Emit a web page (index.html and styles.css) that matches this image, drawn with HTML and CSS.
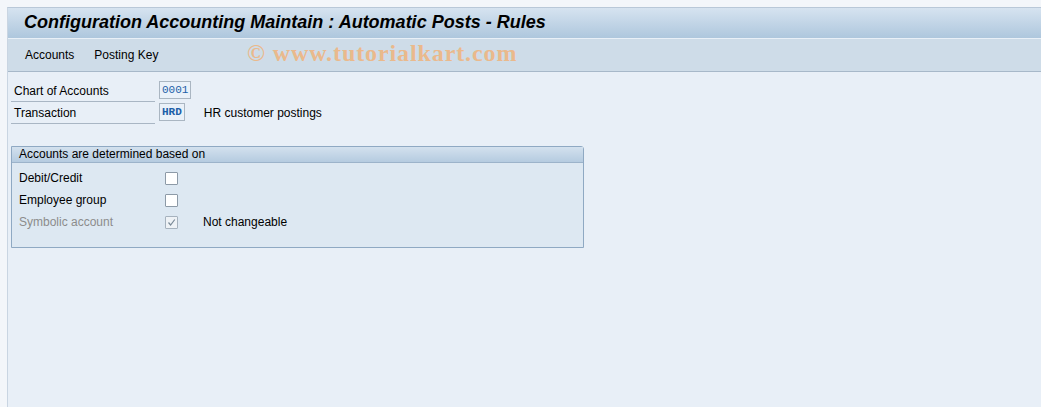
FILE: index.html
```html
<!DOCTYPE html>
<html lang="en">
<head>
  <meta charset="UTF-8">
  <title>Automatic Posts - Rules</title>
  <link rel="stylesheet" href="styles.css">
</head>
<body>
  <div class="window">
    <div class="title-bar">Configuration Accounting Maintain : Automatic Posts - Rules</div>
    <div class="toolbar">
      <span class="menu-item">Accounts</span>
      <span class="menu-item">Posting Key</span>
      <span class="watermark">&copy; www.tutorialkart.com</span>
    </div>

    <div class="content">
      <div class="field-row">
        <span class="field-label">Chart of Accounts</span>
        <span class="field-input">0001</span>
      </div>
      <div class="field-row">
        <span class="field-label">Transaction</span>
        <span class="field-input bold">HRD</span>
        <span class="field-text">HR customer postings</span>
      </div>

      <div class="group">
        <div class="group-title">Accounts are determined based on</div>
        <div class="group-body">
          <div class="check-row">
            <span class="check-label">Debit/Credit</span>
            <span class="checkbox"></span>
          </div>
          <div class="check-row">
            <span class="check-label">Employee group</span>
            <span class="checkbox"></span>
          </div>
          <div class="check-row">
            <span class="check-label disabled">Symbolic account</span>
            <span class="checkbox checked">
              <svg width="9" height="9" viewBox="0 0 9 9"><path d="M1.5 4.5 L3.6 7 L7.8 1.5" fill="none" stroke="#7a8a98" stroke-width="1.2"/></svg>
            </span>
            <span class="check-text">Not changeable</span>
          </div>
        </div>
      </div>
    </div>
  </div>
</body>
</html>
```

FILE: styles.css
```css
html, body {
  margin: 0;
  padding: 0;
  height: 100%;
}
body {
  font-family: "Liberation Sans", Arial, sans-serif;
  font-size: 12px;
  color: #000;
  background: #f3f6fa;
  padding: 7px 0 0 7px;
  box-sizing: border-box;
  overflow: hidden;
}
.window {
  height: 100%;
  border-left: 1px solid #c9d5e2;
  border-top: 1px solid #b9c8d8;
  background: #e8eff7;
}
.title-bar {
  height: 30px;
  line-height: 28px;
  padding-left: 16px;
  font-size: 18px;
  font-weight: bold;
  font-style: italic;
  color: #000;
  background: linear-gradient(#d6e3f0, #aec7dd);
  border-bottom: 1px solid #e9f0f7;
}
.toolbar {
  height: 32px;
  display: flex;
  align-items: center;
  padding-left: 17px;
  background: #cedce8;
  border-bottom: 1px solid #a7b8c9;
  position: relative;
}
.menu-item {
  margin-right: 20px;
  font-size: 12px;
}
.watermark {
  position: absolute;
  left: 239px;
  top: 1px;
  font-family: "Liberation Serif", serif;
  font-size: 24px;
  font-weight: bold;
  color: #eab98c;
  letter-spacing: 0.9px;
}
.content {
  padding: 8px 0 0 3px;
}
.field-row {
  display: flex;
  align-items: center;
  height: 22px;
}
.field-label {
  width: 141px;
  padding-left: 3px;
  height: 20px;
  line-height: 20px;
  border-bottom: 1px solid #a9b6c4;
  margin-right: 4px;
}
.field-input {
  height: 16px;
  line-height: 16px;
  padding: 0 2px;
  font-family: "Liberation Mono", monospace;
  font-size: 11px;
  color: #1d5fa8;
  background: #eaf1f9;
  border: 1px solid #aab6c2;
  margin-top: -2px;
}
.field-input.bold {
  font-weight: bold;
}
.field-text {
  margin-left: 19px;
}
.group {
  width: 571px;
  margin-top: 22px;
  border: 1px solid #8fa9c3;
  border-radius: 0 3px 0 0;
  background: #dde8f2;
}
.group-title {
  height: 15px;
  line-height: 15px;
  padding-left: 7px;
  background: linear-gradient(#d3e1ee, #b5cbe0);
  border-bottom: 1px solid #9cb3ca;
}
.group-body {
  padding: 4px 0 14px 7px;
}
.check-row {
  display: flex;
  align-items: center;
  height: 22px;
}
.check-label {
  width: 146px;
}
.check-label.disabled {
  color: #8c8c8c;
}
.checkbox {
  width: 11px;
  height: 11px;
  border: 1px solid #8d9aa7;
  border-radius: 1px;
  background: #fff;
  display: flex;
  align-items: center;
  justify-content: center;
}
.checkbox.checked {
  background: #eef2f6;
  border-color: #a6b2be;
}
.check-text {
  margin-left: 25px;
}
```
